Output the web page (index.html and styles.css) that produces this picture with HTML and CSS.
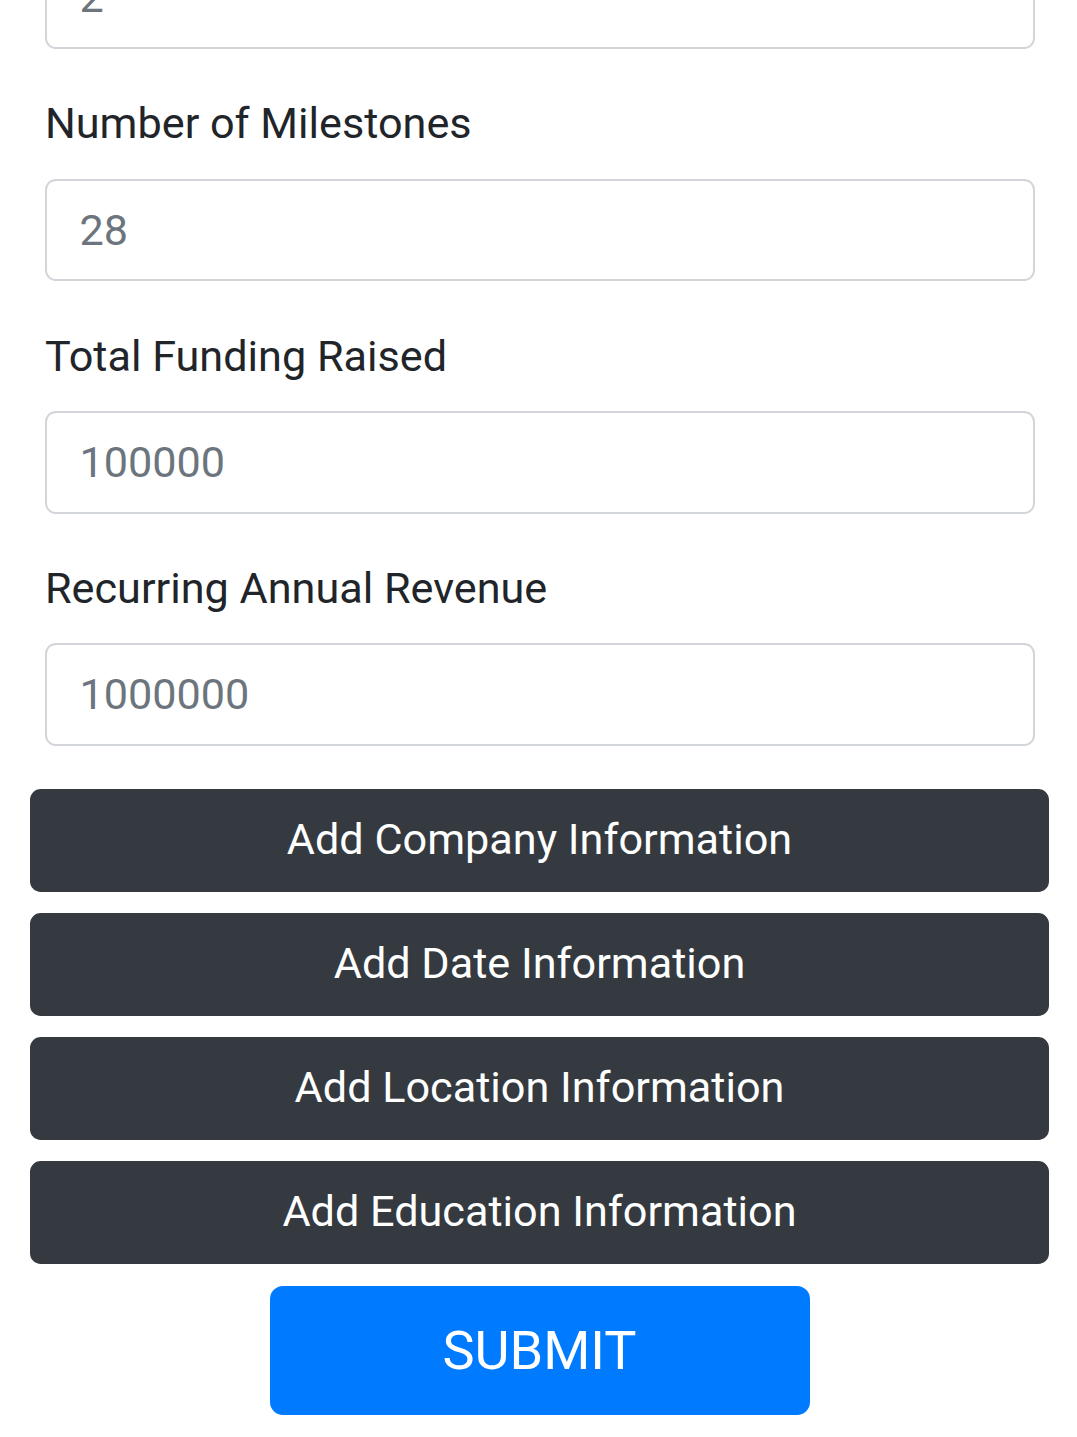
FILE: index.html
```html
<!DOCTYPE html>
<html lang="en">
<head>
<meta charset="utf-8">
<title>Form</title>
<link rel="stylesheet" href="styles.css">
</head>
<body>
<div class="page">
  <form class="form">
    <div class="group">
      <input class="field" type="text" value="2">
    </div>
    <div class="group">
      <label class="label">Number of Milestones</label>
      <input class="field" type="text" value="28">
    </div>
    <div class="group">
      <label class="label">Total Funding Raised</label>
      <input class="field" type="text" value="100000">
    </div>
    <div class="group">
      <label class="label">Recurring Annual Revenue</label>
      <input class="field" type="text" value="1000000">
    </div>
  </form>
  <div class="actions">
    <button class="btn-dark" type="button">Add Company Information</button>
    <button class="btn-dark" type="button">Add Date Information</button>
    <button class="btn-dark" type="button">Add Location Information</button>
    <button class="btn-dark" type="button">Add Education Information</button>
    <button class="btn-submit" type="button">SUBMIT</button>
  </div>
</div>
</body>
</html>
```

FILE: styles.css
```css
* {
  box-sizing: border-box;
}

html, body {
  margin: 0;
  padding: 0;
  background: #ffffff;
}

body {
  font-family: Roboto, "Noto Sans", "Liberation Sans", sans-serif;
  font-size: 43.2px;
  line-height: 1.5;
  color: #212529;
}

.page {
  display: flex;
  flex-direction: column;
  padding: 0 28px 0 30px;
}

.form {
  display: flex;
  flex-direction: column;
  gap: 43.2px;
  margin-top: -53.4px;
  padding: 0 14px 0 15px;
}

.group {
  display: flex;
  flex-direction: column;
}

.label {
  display: block;
  margin: 0 0 21.6px 0;
  font-size: 43.2px;
  line-height: 1.5;
  color: #212529;
}

.field {
  display: block;
  width: 100%;
  height: 102.6px;
  padding: 16.2px 32.4px;
  font-family: inherit;
  font-size: 43.2px;
  line-height: 1.5;
  color: #6c757d;
  background: #ffffff;
  border: 2.7px solid #d2d5d9;
  border-radius: 10.8px;
  outline: none;
}

.actions {
  display: flex;
  flex-direction: column;
  align-items: center;
  gap: 21.6px;
  margin-top: 43.2px;
}

.btn-dark {
  display: block;
  width: 100%;
  height: 102.6px;
  padding: 16.2px 32.4px;
  font-family: inherit;
  font-size: 43.2px;
  line-height: 1.5;
  color: #ffffff;
  background: #343a40;
  border: 2.7px solid #343a40;
  border-radius: 10.8px;
  text-align: center;
}

.btn-submit {
  display: block;
  width: 540px;
  height: 129.6px;
  padding: 21.6px 43.2px;
  font-family: inherit;
  font-size: 54px;
  line-height: 1.5;
  color: #ffffff;
  background: #007bff;
  border: 2.7px solid #007bff;
  border-radius: 13px;
  text-align: center;
}
```
